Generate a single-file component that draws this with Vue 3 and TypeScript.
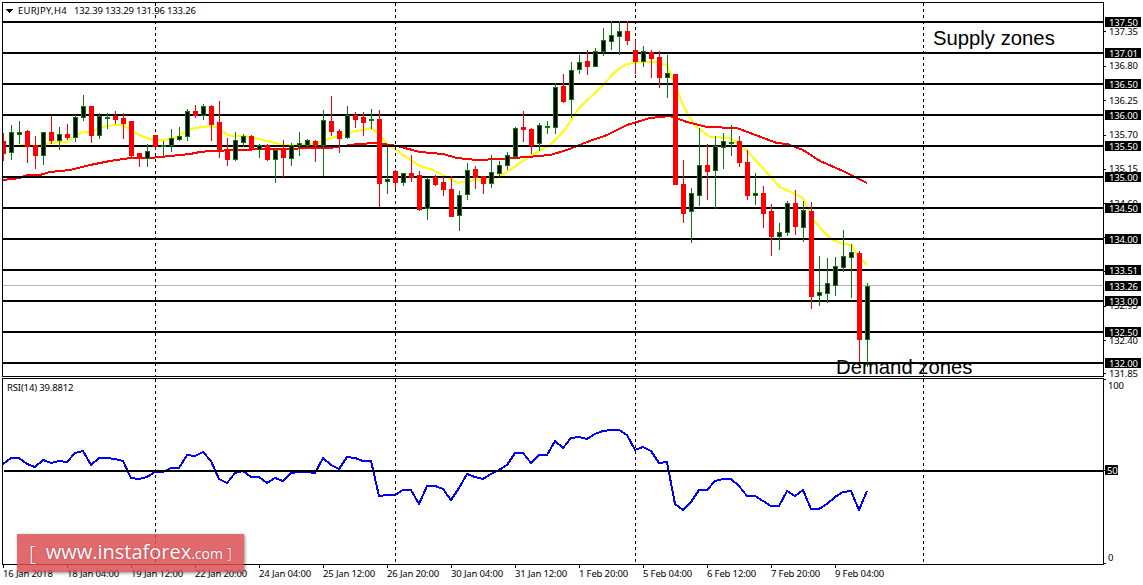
<script setup lang="ts">
// candle: [kind, high, bodyTop, bodyBottom, low]
const raw: Array<[string, number, number, number, number]> = [
  ['r',133,141,153,160],['b',125,132,152,159],['b',121,132,134,143],['r',130,131,146,162],['r',136,145,155,168],
  ['b',132,132,155,164],['r',116,132,140,143],['b',127,134,140,149],['r',124,134,137,139],['b',115,117,137,141],
  ['b',95,106,117,120],['r',106,106,135,142],['b',113,116,135,138],['b',113,117,118,128],['r',111,116,119,123],
  ['r',113,118,123,138],['r',121,121,155,158],['r',153,153,158,166],['b',144,151,158,166],['r',135,135,146,148],
  ['b',141,145,146,157],['b',129,138,145,151],['b',127,136,139,140],['b',109,111,136,140],['r',105,111,115,117],
  ['b',104,106,115,119],['r',105,106,124,140],['r',101,122,150,157],['r',138,150,159,165],['b',132,140,159,160],
  ['b',134,136,142,146],['r',135,136,148,150],['b',144,145,149,157],['r',144,145,159,160],['b',150,150,159,182],
  ['r',140,150,157,176],['b',143,145,158,165],['b',132,143,145,155],['b',139,140,145,146],['r',140,141,145,161],
  ['b',110,120,145,175],['r',96,121,131,135],['r',129,131,138,152],['b',106,115,137,138],['r',112,115,119,127],
  ['r',112,117,122,135],['b',109,119,120,128],['r',110,119,183,206],['b',147,179,181,193],['r',170,171,182,188],
  ['b',173,173,182,185],['r',155,173,177,181],['r',171,175,209,210],['b',177,179,208,219],['r',175,177,184,185],
  ['r',177,182,189,195],['r',176,189,216,216],['b',191,195,215,230],['b',163,170,194,199],['r',166,169,177,188],
  ['r',176,176,183,193],['b',155,172,183,187],['b',161,165,173,176],['b',152,155,165,169],['b',127,128,156,158],
  ['r',111,127,129,141],['r',128,129,145,153],['b',123,125,143,150],['b',121,126,127,133],['b',83,87,127,133],
  ['r',74,86,101,102],['b',62,70,99,117],['b',55,62,69,73],['r',50,61,66,74],['b',48,51,66,66],
  ['b',28,40,51,55],['b',21,35,41,49],['b',21,31,36,54],['r',21,31,40,44],['r',40,50,61,73],
  ['b',46,51,61,66],['r',50,52,58,77],['r',51,57,77,87],['b',55,73,77,97],['r',74,74,184,184],
  ['r',160,184,213,222],['b',188,193,211,242],['b',128,165,195,205],['r',144,165,171,199],['b',136,146,170,208],
  ['b',133,141,147,168],['b',125,142,143,155],['r',136,141,162,166],['r',150,162,195,199],['b',173,193,195,204],
  ['r',186,193,213,227],['r',204,211,236,255],['b',223,232,236,249],['b',201,203,232,235],['r',190,203,226,234],
  ['b',201,210,227,241],['r',202,211,296,308],['b',256,292,295,305],['b',258,283,293,302],['b',257,266,285,295],
  ['b',230,256,267,271],['b',244,252,257,297],['r',251,253,339,361],['b',283,286,339,366],
]
const candles = raw.map(([kind, high, top, bottom, low], i) => {
  const x = 3 + i * 8
  const left = Math.max(3, x - 2)
  return { kind, x, high, top, bottom, low, left, width: x + 3 - left }
})
const yellow = '19,145 27,145 35,146 43,145 51,143 59,142 67,142 75,136 83,132 91,132 99,128 107,126 115,125 123,125 131,130 139,135 147,138 155,140 163,140 171,139 179,136 187,130 195,128 203,127 211,126 219,128 227,135 235,136 243,136 251,137 259,139 267,141 275,143 283,145 291,145 299,145 307,144 315,144 323,141 331,138 339,136 347,134 355,131 363,130 371,128 379,134 387,145 395,149 403,155 420,166 433,170 447,177 458,183 467,181 497,178 510,170 527,158 550,145 563,132 580,107 600,88 617,70 627,64 640,62 657,62 667,65 673,80 683,105 690,118 697,127 710,137 730,138 743,147 760,165 780,187 793,193 803,198 813,220 827,235 833,240 843,244 852,245 857,255 867,265'
const redMa = '3,180 20,178 27,175 40,175 50,172 70,170 90,165 110,161 130,158 150,158 170,156 190,154 200,152 210,151 267,149 330,148 357,144 377,143 397,146 420,152 443,154 457,158 477,160 500,159 527,157 550,155 567,150 587,142 607,135 627,125 650,118 670,116 687,122 707,127 737,128 750,133 777,143 787,144 803,150 820,161 843,171 857,178 867,183'
const rsiY = [464,458,458,464,467,460,463,461,462,453,451,465,458,458,459,461,478,479,477,472,472,468,468,455,456,452,461,479,483,473,471,477,477,483,478,481,473,472,472,473,458,465,469,457,458,461,461,496,495,495,490,490,504,486,486,489,500,488,474,477,479,474,470,465,453,453,463,455,455,441,448,438,437,439,434,431,430,430,435,450,447,451,463,462,504,510,502,490,490,481,479,479,486,496,496,501,506,506,491,496,490,509,509,504,497,492,491,510,491]
const rsi = rsiY.map((y, i) => `${3 + i * 8},${y}`).join(' ')

const levels = [22, 53, 84, 115, 146, 177, 208, 239, 270, 301, 332, 363]
const verticals = [155, 395, 635, 923]
const scale: Array<[string, number]> = [
  ['137.35', 31], ['136.80', 65.5], ['136.25', 100], ['135.70', 134.5], ['135.15', 168.5],
  ['134.60', 203], ['134.05', 237], ['133.50', 271], ['132.95', 305.5], ['132.40', 340], ['131.85', 373],
]
const tags: Array<[string, number]> = [
  ['137.50', 22], ['137.01', 53], ['136.50', 84], ['136.00', 115], ['135.50', 146], ['135.00', 177],
  ['134.50', 208], ['134.00', 239], ['133.51', 270], ['133.26', 286], ['133.00', 301], ['132.50', 332], ['132.00', 363],
]
const times = ['16 Jan 2018','18 Jan 04:00','19 Jan 12:00','22 Jan 20:00','24 Jan 04:00','25 Jan 12:00','26 Jan 20:00','30 Jan 04:00','31 Jan 12:00','1 Feb 20:00','5 Feb 04:00','6 Feb 12:00','7 Feb 20:00','9 Feb 04:00']
</script>

<template>
  <div class="terminal">
    <svg class="pane main-pane" viewBox="0 0 1143 377" width="1143" height="377">
      <rect class="frame" x="2.5" y="2.5" width="1101" height="374" />
      <polyline class="ma yellow" :points="yellow" />
      <polyline class="ma red" :points="redMa" />
      <rect class="gray" x="3" y="285" width="1100" height="1" />
      <line v-for="x in verticals" :key="x" class="dash" :x1="x + 0.5" :x2="x + 0.5" y1="3" y2="376" />
      <rect v-for="y in levels" :key="y" class="level" x="3" :y="y - 1" width="1101" height="2" />
      <g v-for="c in candles" :key="c.x">
        <rect :class="c.kind === 'r' ? 'bear' : 'bull'" :x="c.x" :y="c.high" width="1" :height="c.low - c.high + 1" />
        <rect :class="c.kind === 'r' ? 'bear' : 'bull'" :x="c.left" :y="c.top" :width="c.width" :height="c.bottom - c.top + 1" />
        <rect v-if="c.kind === 'b' && c.bottom - c.top > 1" class="body" :x="c.x - 1" :y="c.top + 1" width="3" :height="c.bottom - c.top - 1" />
      </g>
      <text class="small symbol" x="18" y="14">EURJPY,H4</text>
      <text class="small" x="74" y="14">132.39</text>
      <text class="small" x="105" y="14">133.29</text>
      <text class="small" x="136" y="14">131.96</text>
      <text class="small" x="167" y="14">133.26</text>
      <path class="arrow" d="M6 9h7l-3.500 4z" />
      <text class="note" x="933" y="45">Supply zones</text>
      <text class="note" x="836" y="374">Demand zones</text>
      <g v-for="[label, y] in scale" :key="label">
        <rect class="tick" x="1104" :y="Math.round(y)" width="2" height="1" />
        <text class="small" x="1109" :y="y + 3.500">{{ label }}</text>
      </g>
      <g v-for="[label, y] in tags" :key="label">
        <rect class="tag" x="1105" :y="y - 5" width="36" height="10" />
        <text class="small inverse" x="1109" :y="y + 3.500">{{ label }}</text>
      </g>
    </svg>

    <svg class="pane rsi-pane" viewBox="0 377 1143 188" width="1143" height="188">
      <rect class="frame" x="2.5" y="378.500" width="1101" height="186" />
      <polyline class="rsi" :points="rsi" />
      <line v-for="x in verticals" :key="x" class="dash" :x1="x + 0.5" :x2="x + 0.5" y1="379" y2="564" />
      <rect class="level" x="4" y="470" width="1100" height="2" />
      <text class="small" x="7" y="391">RSI(14) 39.8812</text>
      <text class="small" x="1108" y="389">100</text>
      <rect class="tag" x="1105" y="465" width="13" height="10" />
      <text class="small inverse" x="1107" y="474">50</text>
      <text class="small" x="1108" y="561">0</text>
      <rect class="tick" x="1104" y="379" width="2" height="1" />
      <rect class="tick" x="1104" y="470" width="2" height="1" />
      <rect class="tick" x="1104" y="563" width="2" height="1" />
    </svg>

    <div class="time-axis">
      <span v-for="t in times" :key="t" class="time">{{ t }}</span>
    </div>

    <div class="watermark">
      <span class="bracket">[</span>
      <span class="www">www.instaforex<small>.com</small></span>
      <span class="bracket end">]</span>
    </div>
  </div>
</template>

<style>
html, body { margin: 0; background: #fff; }
</style>

<style scoped>
.terminal {
  position: relative;
  width: 1143px;
  height: 585px;
  background: #fff;
  overflow: hidden;
  display: flex;
  flex-direction: column;
  font-family: "Noto Sans", "Liberation Sans", sans-serif;
}
.pane { display: block; flex: none; shape-rendering: crispEdges; }
.frame { fill: none; stroke: #000; stroke-width: 1; }
.ma { fill: none; stroke-width: 2; }
.yellow { stroke: #ffff00; }
.red { stroke: #ff0000; }
.gray { fill: #b4b4b4; }
.dash { stroke: #000; stroke-width: 1; stroke-dasharray: 3 3; }
.level { fill: #000; }
.bear { fill: #ff0000; }
.bull { fill: #0a7a0a; }
.body { fill: #000; }
.arrow { fill: #000; }
.tick { fill: #000; }
.tag { fill: #000; }
.small { font-size: 9.500px; letter-spacing: -0.15px; fill: #000; font-family: "Noto Sans", "Liberation Sans", sans-serif; }
.symbol { letter-spacing: 0.3px; }
.inverse { fill: #fff; }
.note { font-size: 20.300px; fill: #000; font-family: "Liberation Sans", Arial, sans-serif; }
.rsi { fill: none; stroke: #0000ff; stroke-width: 2; }
.time-axis {
  display: flex;
  padding-left: 3px;
  height: 20px;
}
.time {
  position: relative;
  flex: none;
  width: 64px;
  padding-top: 3px;
  font-size: 9.500px;
  letter-spacing: -0.15px;
  line-height: 12px;
  color: #000;
  white-space: nowrap;
}
.time::before {
  content: "";
  position: absolute;
  left: 0;
  top: 0;
  width: 1px;
  height: 3px;
  background: #000;
}
.watermark {
  position: absolute;
  left: 17px;
  top: 534px;
  width: 227px;
  height: 38px;
  box-sizing: border-box;
  display: flex;
  align-items: center;
  padding-left: 12px;
  background: rgba(219, 78, 84, 0.84);
  box-shadow: 1px 1px 3px rgba(0, 0, 0, 0.45);
  color: #fff;
  font-family: "Open Sans", "Noto Sans", sans-serif;
  text-shadow: 0 0 2px rgba(120, 0, 0, 0.4);
}
.bracket { font-size: 21px; font-weight: 300; line-height: 38px; }
.www { margin-left: 10px; font-size: 20px; line-height: 38px; white-space: nowrap; }
.www small { font-size: 14px; }
.bracket.end { margin-left: 4px; font-size: 15px; }
</style>
